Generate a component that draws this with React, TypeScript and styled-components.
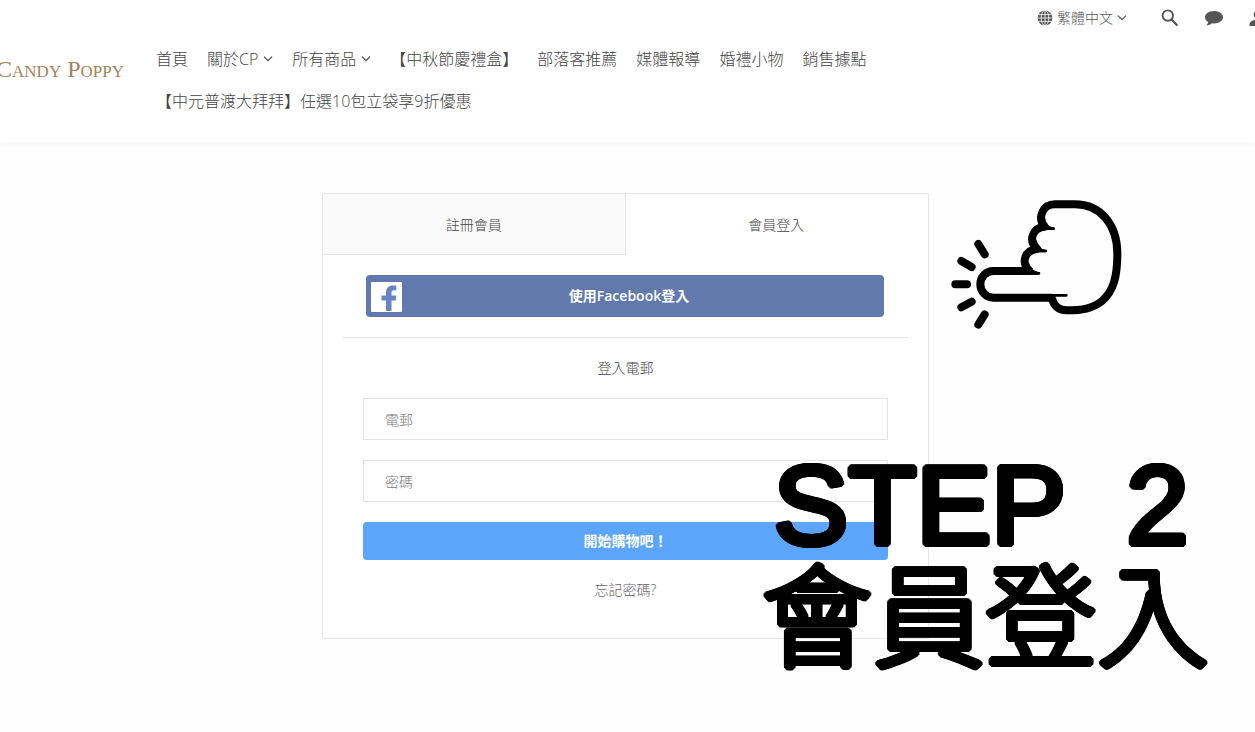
import React from "react";
import styled, { createGlobalStyle } from "styled-components";

const GlobalStyle = createGlobalStyle`
  *, *::before, *::after { box-sizing: border-box; }
  body {
    margin: 0;
    background: #fefefe;
    color: #555;
    font-family: "Open Sans", "Noto Sans CJK TC", sans-serif;
    font-size: 14px;
    font-weight: 300;
    line-height: 20px;
    overflow-x: hidden;
  }
  button, input { font: inherit; }
  a { color: inherit; text-decoration: none; }
`;

const Header = styled.header`
  background: #fff;
  padding-bottom: 20px;
  overflow: hidden;
  border-bottom: 1px solid #fafafa;
  box-shadow: 0 2px 4px rgba(0, 0, 0, 0.03);
`;

const TopBar = styled.div`
  display: flex;
  justify-content: flex-end;
  align-items: center;
  gap: 26px;
  height: 38px;
  margin-right: -12px;
  padding-bottom: 2px;
  color: #555;
`;

const PlainButton = styled.button`
  display: flex;
  align-items: center;
  gap: 4px;
  padding: 0;
  border: 0;
  background: none;
  color: inherit;
  cursor: pointer;
`;

const LanguageButton = styled(PlainButton)`
  margin-right: 8px;
`;

const NavRow = styled.div`
  display: flex;
  gap: 32px;
`;

const Brand = styled.a`
  flex: none;
  display: flex;
  justify-content: flex-end;
  align-items: center;
  width: 124px;
  height: 62px;
  color: #a58458;
  font-family: "Liberation Serif", serif;
  font-size: 24px;
  font-weight: 400;
  font-variant: small-caps;
  white-space: nowrap;
`;

const Nav = styled.nav`
  display: flex;
  flex-wrap: wrap;
  column-gap: 19px;
  max-width: 760px;
`;

const NavLink = styled.a`
  display: flex;
  align-items: center;
  gap: 5px;
  height: 42px;
  color: #444;
  font-size: 16px;
  white-space: nowrap;
`;

const Main = styled.main`
  display: flex;
  justify-content: center;
  padding: 50px 4px 90px 0;
`;

const Stage = styled.div`
  position: relative;
  width: 607px;
`;

const Card = styled.section`
  border: 1px solid #e7e7e7;
  background: #fff;
`;

const Tabs = styled.div`
  display: grid;
  grid-template-columns: 1fr 1fr;
`;

const Tab = styled.button<{ $active?: boolean }>`
  height: 61px;
  padding: 2px 0 0;
  border: solid ${(p) => (p.$active ? "transparent" : "#e4e4e4")};
  border-width: 0 1px 1px 0;
  background: ${(p) => (p.$active ? "#fff" : "#fafafa")};
  color: #444;
  cursor: pointer;
`;

const CardBody = styled.div`
  padding: 20px 20px 38px;
`;

const SocialLogin = styled.div`
  padding: 0 24px 20px 23px;
  border-bottom: 1px solid #e7e7e7;
`;

const FacebookButton = styled.button`
  display: grid;
  grid-template-columns: 32px 1fr 24px;
  align-items: center;
  width: 100%;
  height: 42px;
  padding: 0 4px;
  border: 0;
  border-radius: 4px;
  background: #6279ad;
  color: #fff;
  font-weight: 600;
  cursor: pointer;
`;

const Form = styled.form`
  display: flex;
  flex-direction: column;
  gap: 20px;
  padding: 20px 20px 0;
  text-align: center;
`;

const FormTitle = styled.h2`
  margin: 0;
  color: #444;
  font-size: 14px;
  font-weight: 300;
  line-height: 20px;
`;

const Field = styled.input`
  width: 100%;
  height: 42px;
  padding: 0 21px;
  border: 1px solid #e4e4e4;
  border-radius: 0;
  background: #fff;
  color: #555;
  &::placeholder { color: #777; opacity: 1; }
`;

const SubmitButton = styled.button`
  height: 38px;
  border: 0;
  border-radius: 4px;
  background: #5ba5fc;
  color: #fff;
  font-weight: 700;
  cursor: pointer;
`;

const ForgotLink = styled.a`
  color: #666;
`;

const Hand = styled.svg`
  position: absolute;
  left: 628px;
  top: 4px;
  width: 173px;
  height: 133px;
`;

/* A ring of hard shadows thickens the strokes and rounds their corners. */
const StepCaption = styled.h1`
  position: absolute;
  left: 439px;
  top: 265px;
  margin: 0;
  color: #000;
  font-weight: 400;
  text-align: center;
  white-space: pre;
  pointer-events: none;
  text-shadow:
    3px 0 #000, -3px 0 #000, 0 3px #000, 0 -3px #000,
    2px 2px #000, -2px 2px #000, 2px -2px #000, -2px -2px #000,
    3px 1px #000, -3px 1px #000, 3px -1px #000, -3px -1px #000,
    1px 3px #000, -1px 3px #000, 1px -3px #000, -1px -3px #000;
`;

const StepNumber = styled.span`
  display: block;
  padding-right: 8px;
  font-family: "Liberation Sans", sans-serif;
  font-size: 112px;
  line-height: 96px;
`;

const StepName = styled.span`
  display: block;
  font-family: "Noto Sans CJK TC", sans-serif;
  font-size: 112px;
  font-weight: 300;
  line-height: 112px;
`;

const Chevron = () => (
  <svg width="10" height="6" viewBox="0 0 10 6" fill="none" stroke="currentColor" strokeWidth="1.2" aria-hidden="true">
    <path d="M1 0.7 L5 4.7 L9 0.7" />
  </svg>
);

const Globe = () => (
  <svg width="16" height="16" viewBox="0 0 16 16" aria-hidden="true">
    <circle cx="8" cy="8" r="7.4" fill="currentColor" />
    <g fill="none" stroke="#fff" strokeWidth="0.8">
      <path d="M8 0V16M0.5 8H15.5M1.5 4.6H14.5M1.5 11.4H14.5" />
      <ellipse cx="8" cy="8" rx="3.8" ry="7.6" />
    </g>
  </svg>
);

const Search = () => (
  <svg width="18" height="18" viewBox="0 0 18 18" fill="none" stroke="currentColor" aria-hidden="true">
    <circle cx="6.8" cy="6.6" r="5.2" strokeWidth="1.9" />
    <path d="M10.6 10.6L16.3 16.4" strokeWidth="2.2" />
  </svg>
);

const Chat = () => (
  <svg width="18" height="18" viewBox="0 0 18 18" fill="currentColor" aria-hidden="true">
    <path d="M9 2C4 2 0 4.8 0 8.2c0 2 1.2 3.6 3.2 4.8-.2 1.4-.8 2.4-1.8 3.3 2.2 0 4-.8 5.4-2.1.7.1 1.5.2 2.2.2 5 0 9-2.8 9-6.2S14 2 9 2z" />
  </svg>
);

const User = () => (
  <svg width="18" height="18" viewBox="0 0 18 18" fill="currentColor" aria-hidden="true">
    <circle cx="9" cy="5.5" r="4.3" />
    <path d="M0.5 17v-2c0-2 3-3.7 5.5-4.3h6c2.5.6 5.5 2.3 5.5 4.3v2z" />
  </svg>
);

const FacebookMark = () => (
  <svg width="32" height="32" viewBox="0 0 32 32" aria-hidden="true">
    <rect x="1" y="2" width="31" height="30" rx="1" fill="#fff" />
    <path
      d="M16 31V20.6H11.5v-5H16v-2.5c0-5 2.5-7.6 7-7.6h3.3v4.7h-2.3c-2 0-2.5.9-2.5 2.6v2.8h4.8l-.5 5h-4.3V31z"
      fill="#6584c1"
    />
  </svg>
);

const PointingHand = () => (
  <Hand viewBox="30 20 519 399" fill="none" stroke="#000" strokeLinecap="round" strokeLinejoin="round" aria-hidden="true">
    <g strokeWidth="24">
      <path d="M115 161L134 192M64 212L95 230M46 282H81M64 351L95 334M134 372L115 403" />
      <path
        strokeLinecap="butt"
        d="M272 242H160a39 40 0 0 0 0 80H335C341 347 356 360 380 360C425 360 458 355 486 332C522 302 532 255 532 190C532 101 480 42 405 42H345C308 42 291 82 314 109C277 112 264 151 291 175C252 180 241 222 272 244"
      />
    </g>
    <path strokeWidth="8" d="M341 115H312M318 182H285M297 249H262M379 315H300" />
    <g fill="#000" stroke="none">
      <path d="M315 84C317 100 327 110 341 111V119H308L300 100Z" />
      <path d="M290 150C292 168 304 178 318 178V186H284L276 166Z" />
      <path d="M267 216C269 234 283 244 298 245V253H262L254 232Z" />
    </g>
  </Hand>
);

const links: { label: string; menu?: boolean }[] = [
  { label: "首頁" },
  { label: "關於CP", menu: true },
  { label: "所有商品", menu: true },
  { label: "【中秋節慶禮盒】" },
  { label: "部落客推薦" },
  { label: "媒體報導" },
  { label: "婚禮小物" },
  { label: "銷售據點" },
  { label: "【中元普渡大拜拜】任選10包立袋享9折優惠" },
];

export default function App() {
  return (
    <>
      <GlobalStyle />
      <Header>
        <TopBar>
          <LanguageButton type="button">
            <Globe />
            繁體中文
            <Chevron />
          </LanguageButton>
          <PlainButton type="button" aria-label="搜尋"><Search /></PlainButton>
          <PlainButton type="button" aria-label="訊息"><Chat /></PlainButton>
          <PlainButton type="button" aria-label="會員"><User /></PlainButton>
        </TopBar>
        <NavRow>
          <Brand href="#">Candy Poppy</Brand>
          <Nav>
            {links.map((link) => (
              <NavLink href="#" key={link.label}>
                {link.label}
                {link.menu && <Chevron />}
              </NavLink>
            ))}
          </Nav>
        </NavRow>
      </Header>
      <Main>
        <Stage>
          <Card>
            <Tabs role="tablist">
              <Tab type="button" role="tab" aria-selected={false}>註冊會員</Tab>
              <Tab type="button" role="tab" aria-selected $active>會員登入</Tab>
            </Tabs>
            <CardBody>
              <SocialLogin>
                <FacebookButton type="button">
                  <FacebookMark />
                  <span>使用Facebook登入</span>
                </FacebookButton>
              </SocialLogin>
              <Form onSubmit={(e) => e.preventDefault()}>
                <FormTitle>登入電郵</FormTitle>
                <Field type="email" placeholder="電郵" aria-label="電郵" />
                <Field type="password" placeholder="密碼" aria-label="密碼" />
                <SubmitButton type="submit">開始購物吧！</SubmitButton>
                <ForgotLink href="#">忘記密碼?</ForgotLink>
              </Form>
            </CardBody>
          </Card>
          <PointingHand />
          <StepCaption>
            <StepNumber>{"STEP  2"}</StepNumber>
            <StepName>會員登入</StepName>
          </StepCaption>
        </Stage>
      </Main>
    </>
  );
}
